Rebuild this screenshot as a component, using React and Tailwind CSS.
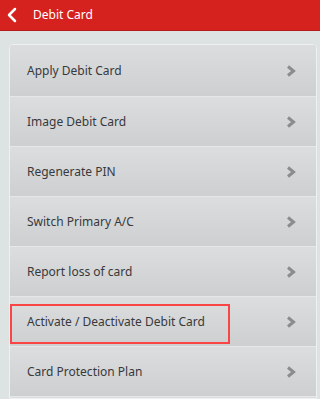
import { ChevronLeft } from "lucide-react";

const items = [
    "Apply Debit Card",
    "Image Debit Card",
    "Regenerate PIN",
    "Switch Primary A/C",
    "Report loss of card",
    "Activate / Deactivate Debit Card",
    "Card Protection Plan",
    "",
];

function Arrow() {
    return (
        <svg width="10" height="12" viewBox="0 0 10 12" className="shrink-0">
            <polyline points="2,1.5 7.5,6 2,10.5" fill="none" stroke="#8b8c8e" strokeWidth="3" strokeLinejoin="miter" />
        </svg>
    );
}

export default function App() {
    return (
        <div className="relative w-[320px] h-[399px] overflow-hidden bg-[#dde2e3] flex flex-col" style={{ fontFamily: '"Noto Sans", "Open Sans", sans-serif' }}>
            <div className="h-[31px] bg-[#d6221f] flex items-center shrink-0 border-b border-[#b71b19]">
                <ChevronLeft size={24} strokeWidth={2.5} className="text-white" />
                <span className="text-white text-[12px] ml-[9px]">Debit Card</span>
            </div>
            <div className="mt-[13px] ml-[9px] mr-[3px] border border-[#eef0f1] rounded-t-[4px] overflow-hidden bg-[#d4d5d7]">
                {items.map((label, i) => (
                    <div
                        key={i}
                        className="h-[50px] first:h-[51px] flex items-center justify-between pl-[17px] pr-[20px] border-t border-[#e6e7e8] first:border-t-0 bg-gradient-to-b from-[#dcdddf] to-[#cdcfd1]"
                    >
                        <span className="text-[12px] text-[#38393b]">{label}</span>
                        {label && <Arrow />}
                    </div>
                ))}
            </div>
            <div className="absolute left-[10px] top-[304px] w-[220px] h-[40px] border-2 border-[#f94545] pointer-events-none" />
        </div>
    );
}
